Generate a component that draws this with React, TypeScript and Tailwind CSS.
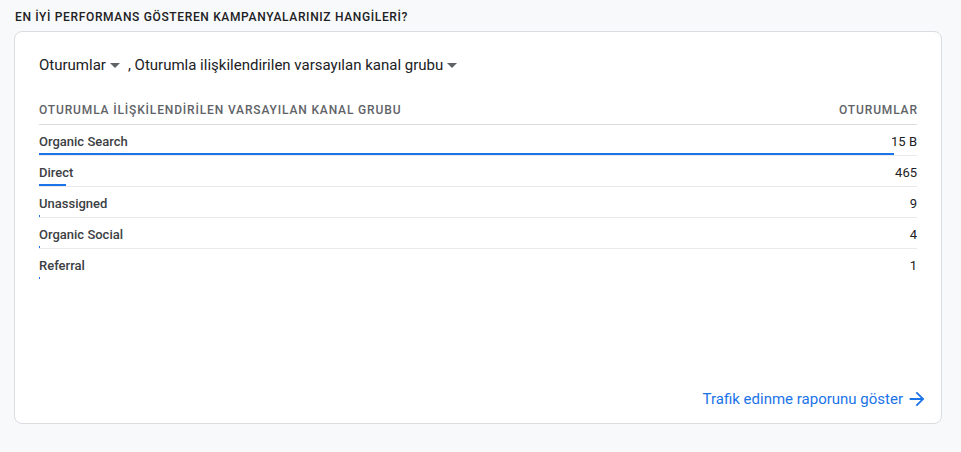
import React from 'react';

interface ChannelRow {
    label: string;
    display: string;
    sessions: number;
}

const rows: ChannelRow[] = [
    { label: 'Organic Search', display: '15 B', sessions: 15000 },
    { label: 'Direct', display: '465', sessions: 465 },
    { label: 'Unassigned', display: '9', sessions: 9 },
    { label: 'Organic Social', display: '4', sessions: 4 },
    { label: 'Referral', display: '1', sessions: 1 },
];

const maxSessions = Math.max(...rows.map(r => r.sessions));

const Caret = () => (
    <svg width="10" height="5" viewBox="0 0 10 5" className="ml-[4px] shrink-0">
        <path d="M0 0l5 5 5-5z" fill="#5f6368" />
    </svg>
);

const ArrowForward = () => (
    <svg width="22" height="22" viewBox="0 0 24 24" className="ml-[3px]">
        <path d="M12 4l-1.41 1.41L16.17 11H4v2h12.17l-5.58 5.59L12 20l8-8z" fill="#1a73e8" />
    </svg>
);

export default function App() {
    return (
        <div
            className="min-h-[452px] w-[961px] bg-[#f8f9fa] px-[14px] pt-[9px]"
            style={{ fontFamily: 'Roboto, "Noto Sans", Arial, sans-serif' }}
        >
            <h2 className="h-[16px] pl-[1px] text-[12px] font-medium leading-[16px] tracking-[0.65px] text-[#202124]">
                EN İYİ PERFORMANS GÖSTEREN KAMPANYALARINIZ HANGİLERİ?
            </h2>
            <div className="mt-[6px] flex h-[393px] w-[928px] flex-col rounded-lg border border-[#dadce0] bg-white">
                <div className="px-6 pt-[23px]">
                    {/* metric / dimension pickers */}
                    <div className="flex h-5 items-center text-[15px] text-[#202124]">
                        <span>Oturumlar</span>
                        <Caret />
                        <span className="ml-[8px]">, Oturumla ilişkilendirilen varsayılan kanal grubu</span>
                        <Caret />
                    </div>

                    <div className="mt-5">
                        <div className="flex h-[30px] items-center justify-between border-b border-[#dadce0] text-[12px] font-medium tracking-[0.85px] text-[#5f6368]">
                            <span>OTURUMLA İLİŞKİLENDİRİLEN VARSAYILAN KANAL GRUBU</span>
                            <span className="-mr-[0.85px]">OTURUMLAR</span>
                        </div>
                        {rows.map((row, i) => (
                            <div
                                key={row.label}
                                className={i < rows.length - 1 ? 'border-b border-[#e8eaed]' : ''}
                            >
                                <div className="flex h-[28px] items-center justify-between pt-[6px] text-[13px] text-[#3c4043]">
                                    <span className="font-medium">{row.label}</span>
                                    <span className="text-[#202124]">{row.display}</span>
                                </div>
                                <div className="h-[2px] w-[855px]">
                                    <div
                                        className="h-full bg-[#1a73e8]"
                                        style={{ width: `${Math.max((row.sessions / maxSessions) * 100, 0.12)}%` }}
                                    />
                                </div>
                            </div>
                        ))}
                    </div>
                </div>

                <div className="mt-auto flex justify-end pb-[13px] pr-[13px]">
                    <a className="flex h-[22px] cursor-pointer items-center text-[15px] text-[#1a73e8]">
                        Trafik edinme raporunu göster
                        <ArrowForward />
                    </a>
                </div>
            </div>
        </div>
    );
}
